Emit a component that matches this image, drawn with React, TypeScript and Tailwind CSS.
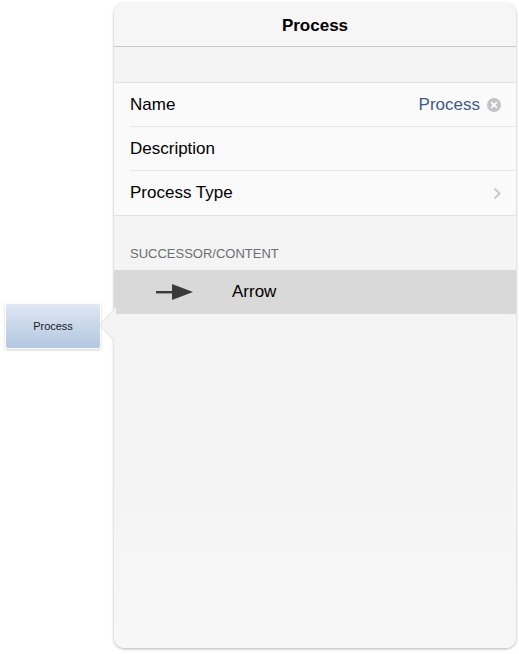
import React from 'react';

function ClearIcon() {
  return (
    <svg width="14" height="14" viewBox="0 0 14 14">
      <circle cx="7" cy="7" r="7" fill="#c3c3c8" />
      <path d="M4.6 4.6 L9.4 9.4 M9.4 4.6 L4.6 9.4" stroke="#fff" strokeWidth="1.6" strokeLinecap="round" />
    </svg>
  );
}

function Chevron() {
  return (
    <svg width="8" height="13" viewBox="0 0 8 13">
      <path d="M1.5 1.5 L6.5 6.5 L1.5 11.5" fill="none" stroke="#c7c7cc" strokeWidth="1.8" />
    </svg>
  );
}

function ArrowGlyph() {
  return (
    <svg width="38" height="18" viewBox="0 0 38 18">
      <rect x="0" y="8" width="18" height="2.4" fill="#3a3a3a" />
      <path d="M16 1 L37 9 L16 17 Z" fill="#3a3a3a" />
    </svg>
  );
}

export default function App() {
  const rows = [
    { label: 'Name', value: 'Process', clear: true },
    { label: 'Description' },
    { label: 'Process Type', chevron: true },
  ];

  return (
    <div className="relative w-[519px] h-[654px] bg-white font-['Liberation_Sans',Arial,sans-serif]">
      {/* diagram node */}
      <div className="absolute left-[5px] top-[303px] w-[96px] h-[46px] rounded-[3px] bg-white p-[1px] shadow-[0_1px_3px_rgba(0,0,0,0.18)]">
        <div className="flex h-full items-center justify-center rounded-[2px] bg-gradient-to-b from-[#dfe7f2] to-[#b3c7e1] text-[11px] text-[#1a1a1a]">
          Process
        </div>
      </div>

      {/* popover */}
      <div className="absolute left-[114px] top-[3px] w-[402px] h-[645px] rounded-[10px] bg-[#f4f4f4] shadow-[0_1px_3px_rgba(0,0,0,0.3)] flex flex-col overflow-hidden">
        <div className="h-[44px] shrink-0 flex items-center justify-center border-b border-[#c8c8c8] bg-[#f6f6f6] pt-[2px] text-[17px] font-bold text-black">
          Process
        </div>
        <div className="h-[35px] shrink-0" />
        <div className="shrink-0 border-y border-[#e3e3e3] bg-[#fafafa]">
          {rows.map((r, i) => (
            <div key={r.label} className="pl-[16px]">
              <div
                className={`h-[44px] flex items-center pr-[15px] ${i < rows.length - 1 ? 'border-b border-[#e6e6e6]' : ''}`}
              >
                <span className="text-[17px] text-black">{r.label}</span>
                <span className="ml-auto flex items-center gap-[7px]">
                  {r.value && <span className="text-[17px] text-[#3f5a8c]">{r.value}</span>}
                  {r.clear && <ClearIcon />}
                  {r.chevron && <Chevron />}
                </span>
              </div>
            </div>
          ))}
        </div>
        <div className="h-[54px] shrink-0 flex items-end pb-[7px] pl-[16px] text-[13px] text-[#6d6d72] uppercase">
          Successor/Content
        </div>
        <div className="h-[44px] shrink-0 flex items-center bg-[#d9d9d9]">
          <span className="ml-[42px]">
            <ArrowGlyph />
          </span>
          <span className="ml-[38px] text-[17px] text-black">Arrow</span>
        </div>
        <div className="flex-1 bg-gradient-to-b from-[#f4f4f4] via-[#f4f4f4] to-[#f7f7f7]" />
      </div>

      {/* popover pointer */}
      <svg className="absolute left-[99px] top-[308px]" width="17" height="36" viewBox="0 0 17 36">
        <path d="M16 0 L1 17 L16 34" fill="#f4f4f4" stroke="#e0e0e0" strokeWidth="1" />
        <rect x="15" y="0" width="2" height="36" fill="#f4f4f4" />
      </svg>
    </div>
  );
}
